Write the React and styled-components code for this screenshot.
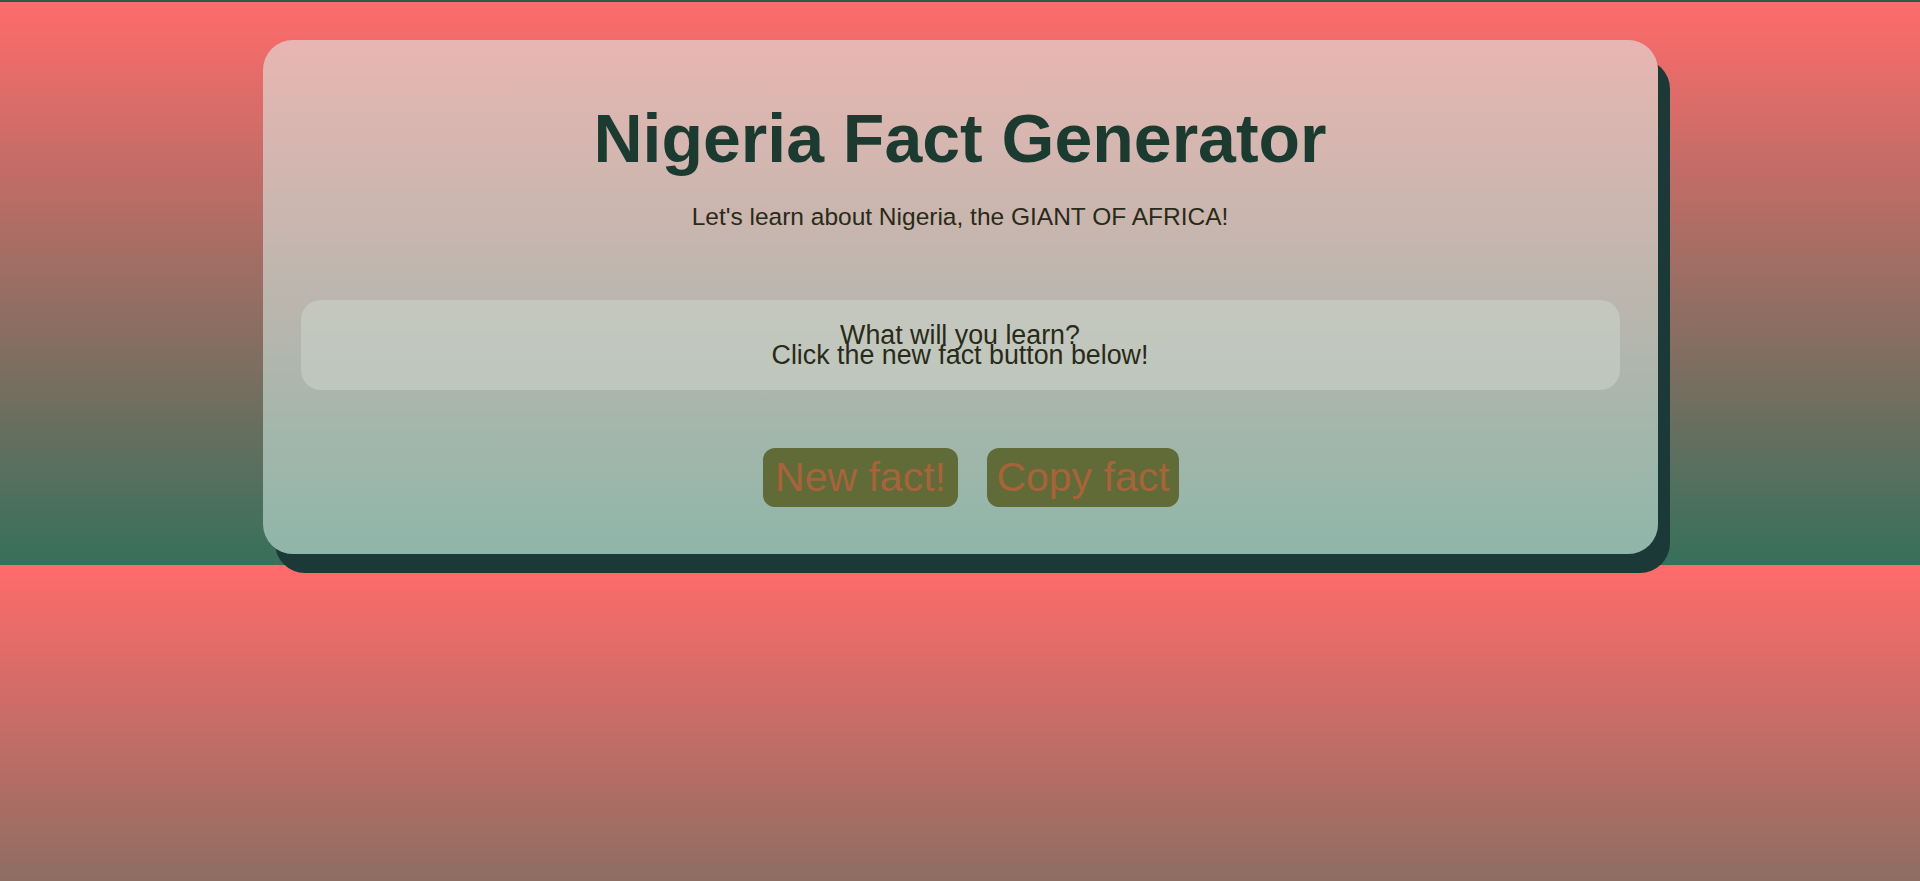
import styled, { createGlobalStyle } from 'styled-components';

const GlobalStyle = createGlobalStyle`
  html {
    background:
      linear-gradient(#2d5c3e, #2d5c3e) 0 0 / 100% 2px no-repeat,
      linear-gradient(180deg, #ff6b6b 0%, #36705b 100%) 0 2px / 100% 563px repeat-y;
  }

  body {
    margin: 0;
    font-family: "Comic Sans MS", "Liberation Sans", Arial, sans-serif;
  }
`;

const Page = styled.main`
  min-height: 100vh;
  box-sizing: border-box;
  padding: 40px 0;
`;

const Card = styled.section`
  width: 1395px;
  margin: 0 auto;
  box-sizing: border-box;
  padding: 64px 38px 47px;
  border-radius: 30px;
  background: linear-gradient(180deg, #e8b6b2 0%, #8fb6a9 100%);
  box-shadow: 12px 19px 0 #1a3937;
  text-align: center;
`;

const Title = styled.h1`
  margin: 0;
  font-size: 68px;
  line-height: 68px;
  font-weight: 700;
  color: #1b3a30;
`;

const Subtitle = styled.p`
  margin: 33px 0 0;
  font-size: 24.5px;
  line-height: 24px;
  color: #2a2a18;
`;

const FactBox = styled.div`
  margin-top: 71px;
  height: 90px;
  border-radius: 20px;
  background: rgba(210, 220, 210, 0.45);
  display: flex;
  flex-direction: column;
  align-items: center;
  justify-content: center;
  font-size: 26.8px;
  line-height: 20px;
  color: #2a2a18;
`;

const FactLine = styled.span`
  display: block;
  white-space: nowrap;
`;

const Actions = styled.div`
  margin-top: 58px;
  padding-left: 22px;
  display: flex;
  justify-content: center;
  gap: 29px;
`;

const ActionButton = styled.button`
  height: 59px;
  width: ${(p) => p.$width}px;
  padding: 0;
  border: none;
  border-radius: 12px;
  background: #606b37;
  color: #a8633a;
  font-family: inherit;
  font-size: 41px;
  line-height: 59px;
  cursor: pointer;
`;

function App() {
  return (
    <Page>
      <GlobalStyle />
      <Card>
        <Title>Nigeria Fact Generator</Title>
        <Subtitle>Let's learn about Nigeria, the GIANT OF AFRICA!</Subtitle>

        <FactBox>
          <FactLine>What will you learn?</FactLine>
          <FactLine>Click the new fact button below!</FactLine>
        </FactBox>

        <Actions>
          <ActionButton $width={195}>New fact!</ActionButton>
          <ActionButton $width={192}>Copy fact</ActionButton>
        </Actions>
      </Card>
    </Page>
  );
}

export default App;
